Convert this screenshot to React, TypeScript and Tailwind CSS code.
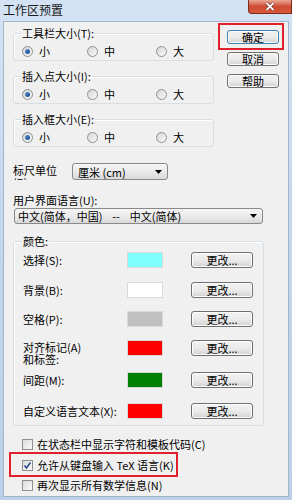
import React from "react";

const btn =
  "flex items-center justify-center rounded-[3px] border border-[#707070] bg-gradient-to-b from-[#f2f2f2] via-[#ebebeb] to-[#d3d3d3] text-[11px] leading-[12px] text-black shadow-[inset_0_0_0_1px_#fcfcfc]";

function Radio({ checked, label }: { checked?: boolean; label: string }) {
  return (
    <div className="flex items-center gap-[6px]">
      <span className="flex h-[11px] w-[11px] items-center justify-center rounded-full border border-[#8e8f8f] bg-gradient-to-br from-[#d4d4d4] to-[#fbfbfb]">
        {checked && (
          <span className="h-[5px] w-[5px] rounded-full bg-gradient-to-br from-[#5a9ae0] to-[#12407e]" />
        )}
      </span>
      <span>{label}</span>
    </div>
  );
}

function SizeGroup({ title, className = "" }: { title: string; className?: string }) {
  return (
    <fieldset
      className={`rounded-[3px] border border-[#d5dfe5] pl-[8px] pb-[2px] shadow-[inset_1px_1px_0_#ffffff] ${className}`}
    >
      <legend className="-ml-[1px] px-[1px] leading-[14px]">{title}</legend>
      <div className="mt-[4px] flex h-[14px] items-center">
        <div className="w-[65px]">
          <Radio checked label="小" />
        </div>
        <div className="w-[69px]">
          <Radio label="中" />
        </div>
        <Radio label="大" />
      </div>
    </fieldset>
  );
}

function Arrow() {
  return (
    <svg width="7" height="4" viewBox="0 0 7 4">
      <polygon points="0,0 7,0 3.5,4" fill="#000" />
    </svg>
  );
}

function Check({ checked, label, className = "" }: { checked?: boolean; label: string; className?: string }) {
  return (
    <div className={`flex h-[14px] items-center gap-[4px] pl-[9px] ${className}`}>
      <span className="flex h-[11px] w-[11px] items-center justify-center border border-[#8f8f8f] bg-gradient-to-br from-[#dcdcdc] to-[#fbfbfb]">
        {checked && (
          <svg width="9" height="9" viewBox="0 0 9 9">
            <path d="M1.5 4.5 L3.5 7 L7.5 1.5" fill="none" stroke="#2f4b95" strokeWidth="1.6" />
          </svg>
        )}
      </span>
      <span className="whitespace-pre">{label}</span>
    </div>
  );
}

const colorRows = [
  { label: "选择(S):", color: "bg-[#80ffff]", mt: "mt-[4px]" },
  { label: "背景(B):", color: "bg-white", mt: "mt-[14px]" },
  { label: "空格(P):", color: "bg-[#c0c0c0]", mt: "mt-[13px]" },
  { label: "对齐标记(A)\n和标签:", color: "bg-[#ff0000]", mt: "mt-[13px]", top: true },
  { label: "间距(M):", color: "bg-[#008000]", mt: "mt-[16px]" },
  { label: "自定义语言文本(X):", color: "bg-[#ff0000]", mt: "mt-[15px]" },
];

export default function App() {
  return (
    <div className="flex h-[500px] w-[292px] flex-col overflow-hidden bg-gradient-to-b from-[#d3e3f4] via-[#c2d6ec] to-[#bcd1e9] font-['Noto_Sans_CJK_SC',sans-serif] text-[11px] text-black">
      {/* title bar */}
      <div className="flex h-[21px] shrink-0 items-start">
        <span className="ml-[3px] mt-[3px] text-[12px] leading-[14px] text-[#1a1a1a]">工作区预置</span>
        <div className="ml-auto flex h-[14px] w-[44px] items-center justify-center rounded-bl-[4px] border border-t-0 border-[#7d2a1c] bg-gradient-to-b from-[#e9a795] via-[#cc4b32] to-[#d9573a]">
          <svg width="10" height="9" viewBox="0 0 10 9">
            <path d="M1.5 1 L8.5 8 M8.5 1 L1.5 8" stroke="#5a1a10" strokeWidth="3" />
            <path d="M1.5 1 L8.5 8 M8.5 1 L1.5 8" stroke="#ffffff" strokeWidth="1.8" />
          </svg>
        </div>
      </div>

      {/* client area */}
      <div className="relative mx-[3px] mb-[3px] flex-1 border border-[#a2b5ca] bg-[#f0f0f0] px-[9px] pt-[4px]">
        <div className="flex">
          <div className="flex w-[201px] flex-col">
            <SizeGroup title="工具栏大小(T):" />
            <SizeGroup title="插入点大小(I):" className="mt-[8px]" />
            <SizeGroup title="插入框大小(E):" className="mt-[8px]" />
          </div>
          <div className="ml-[13px] flex flex-col gap-[8px] pt-[4px]">
            <button className={`${btn} h-[14px] w-[52px] !border-[#3c7fb1] shadow-[inset_0_0_0_1px_#bfe6fb]`}>确定</button>
            <button className={`${btn} h-[14px] w-[52px]`}>取消</button>
            <button className={`${btn} h-[14px] w-[52px]`}>帮助</button>
          </div>
        </div>

        {/* ruler unit */}
        <div className="mt-[16px] flex items-start">
          <div className="mt-[1px] h-[16px] w-[59px] overflow-hidden leading-[12px]">
            标尺单位
            <br />
            (R):
          </div>
          <div className="flex h-[17px] w-[96px] items-center justify-between rounded-[3px] border border-[#8a8a8a] bg-gradient-to-b from-[#f4f4f4] via-[#ebebeb] to-[#d8d8d8] pl-[5px] pr-[5px]">
            <span className="whitespace-pre leading-[12px]">厘米 (cm)</span>
            <Arrow />
          </div>
        </div>

        {/* UI language */}
        <div className="mt-[14px] leading-[12px]">用户界面语言(U):</div>
        <div className="ml-[1px] mt-[2px] flex h-[16px] w-[249px] items-center justify-between rounded-[3px] border border-[#8a8a8a] bg-gradient-to-b from-[#f4f4f4] via-[#ebebeb] to-[#d8d8d8] pl-[3px] pr-[5px]">
          <span className="whitespace-pre leading-[12px]">中文(简体，中国)    --    中文(简体)</span>
          <Arrow />
        </div>

        {/* colours */}
        <fieldset className="mt-[10px] w-[251px] rounded-[3px] border border-[#d5dfe5] pb-[6px] pl-[9px] shadow-[inset_1px_1px_0_#ffffff]">
          <legend className="-ml-[1px] px-[1px] leading-[14px]">颜色:</legend>
          {colorRows.map((r) => (
            <div key={r.label} className={`flex h-[16px] items-center ${r.mt}`}>
              <div
                className={`w-[104px] whitespace-pre leading-[12px] ${r.top ? "self-start pt-[1px]" : ""}`}
              >
                {r.label}
              </div>
              <div className={`h-[16px] w-[36px] border border-[#d9d9d9] ${r.color}`} />
              <button className={`${btn} ml-[28px] h-[16px] w-[62px]`}>更改...</button>
            </div>
          ))}
        </fieldset>

        {/* checkboxes */}
        <Check label="在状态栏中显示字符和模板代码(C)" className="mt-[11px]" />
        <Check checked label="允许从键盘输入 TeX 语言(K)" className="mt-[7px]" />
        <Check label="再次显示所有数学信息(N)" className="mt-[6px]" />

        {/* red annotation boxes */}
        <div className="absolute left-[214px] top-[1px] h-[27px] w-[66px] border-2 border-[#e0202a]" />
        <div className="absolute left-[5px] top-[430px] h-[25px] w-[169px] border-2 border-[#e0202a]" />
      </div>
    </div>
  );
}
